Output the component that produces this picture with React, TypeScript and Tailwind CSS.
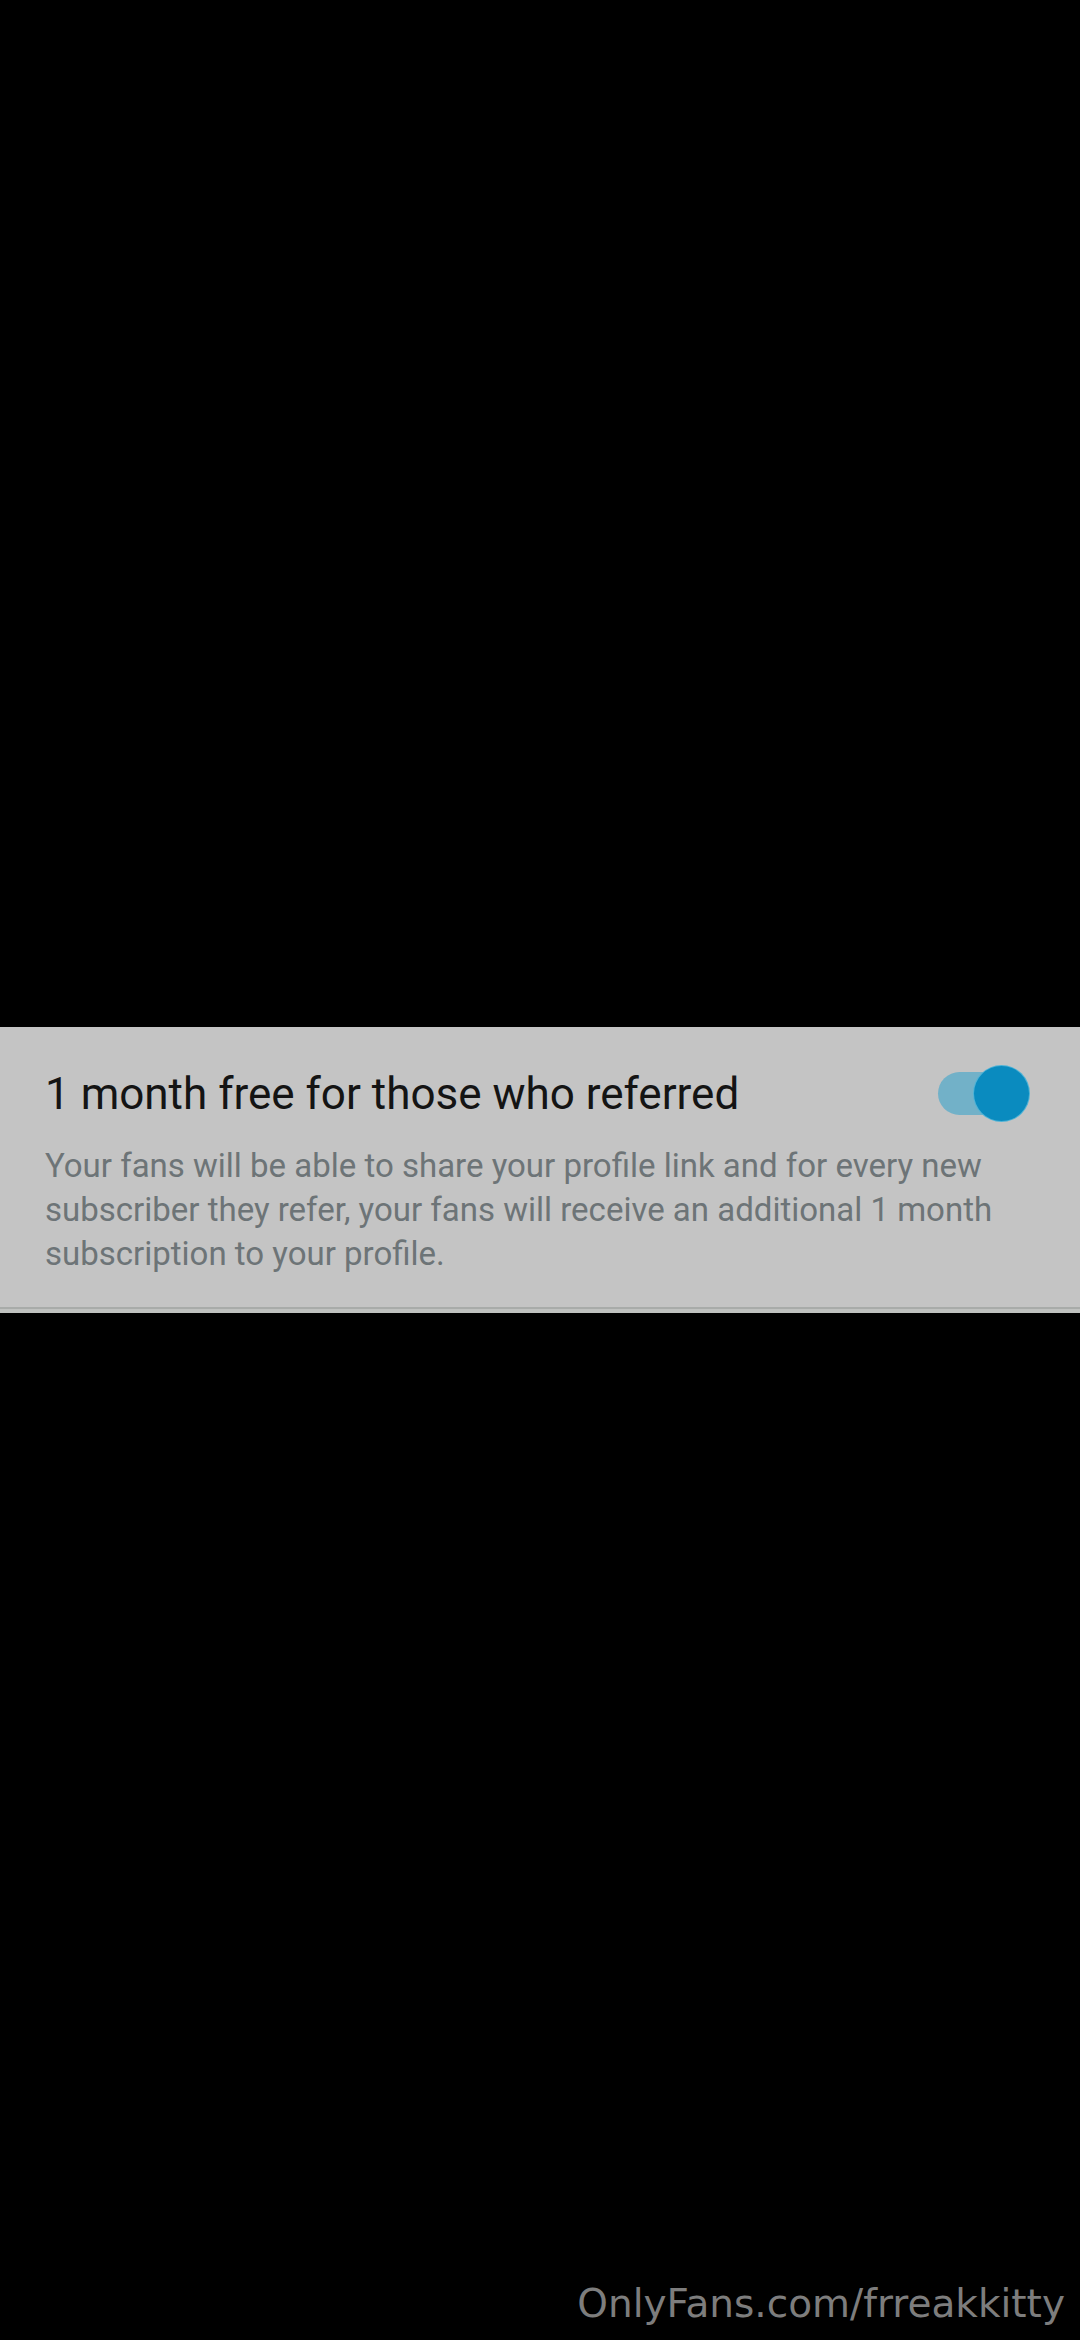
import React, { useState } from 'react';

function Toggle({ on, onChange }: { on: boolean; onChange: () => void }) {
  return (
    <button
      onClick={onChange}
      className="relative w-[91px] h-[55px] shrink-0"
      aria-pressed={on}
    >
      <span className="absolute left-0 top-[6px] w-[82px] h-[43px] rounded-full bg-[#72b1c8]" />
      <span className="absolute right-0 top-0 w-[55px] h-[55px] rounded-full bg-[#0a8bbf] shadow-[0_0_0_1px_#4fb3d6]" />
    </button>
  );
}

export default function App() {
  const [enabled, setEnabled] = useState(true);

  return (
    <div className="relative w-[1080px] h-[2340px] bg-black flex items-center" style={{ fontFamily: 'Roboto, "Noto Sans", sans-serif' }}>
      {/* Setting card */}
      <div className="w-full bg-[#c4c4c4]">
        <div className="pl-[45px] pr-[51px] pt-[39px] pb-[31px]">
          <div className="flex items-center justify-between">
            <h2 className="text-[44px] leading-[52px] font-normal text-[#141414]">
              1 month free for those who referred
            </h2>
            <Toggle on={enabled} onChange={() => setEnabled(!enabled)} />
          </div>
          <p className="mt-[23px] text-[33px] leading-[44px] text-[#6d7477]">
            Your fans will be able to share your profile link and for every new subscriber they refer, your fans will receive an additional 1 month subscription to your profile.
          </p>
        </div>
        <div className="h-[2px] bg-[#a8aba9]" />
        <div className="h-[4px] bg-[#bfc1bf]" />
      </div>

      {/* Watermark */}
      <div
        className="absolute right-[15px] bottom-[17px] text-[39px] leading-none text-[#7d7d7d]"
        style={{ fontFamily: '"DejaVu Sans", sans-serif' }}
      >
        OnlyFans.com/frreakkitty
      </div>
    </div>
  );
}
